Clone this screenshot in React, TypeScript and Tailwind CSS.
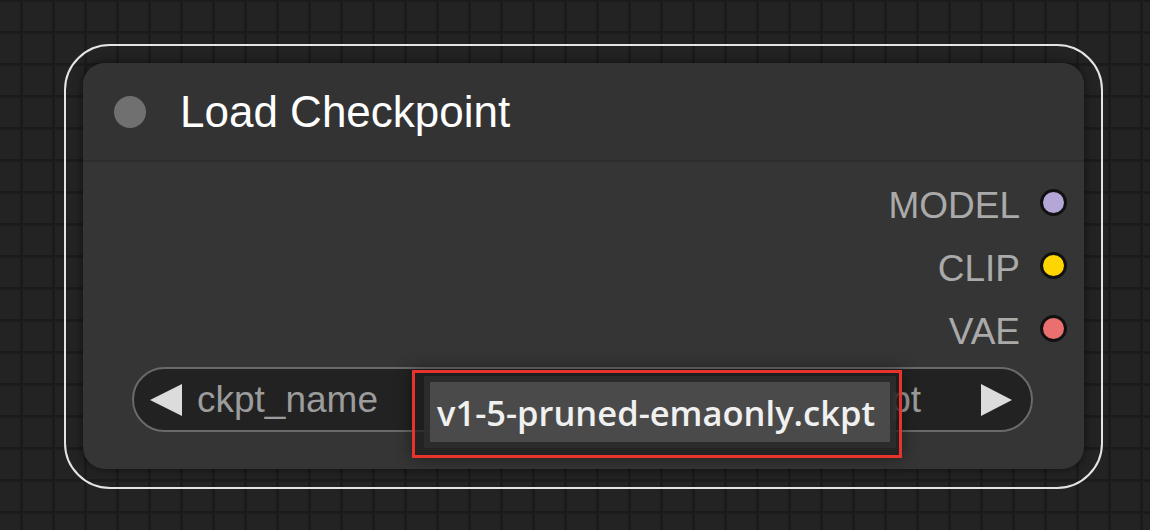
import React from 'react';

interface OutputSlot {
    name: string;
    color: string;
}

const outputs: OutputSlot[] = [
    { name: 'MODEL', color: 'bg-[#b5a6d8]' },
    { name: 'CLIP', color: 'bg-[#ffd500]' },
    { name: 'VAE', color: 'bg-[#ea7070]' },
];

function Arrow({ dir }: { dir: 'left' | 'right' }) {
    return (
        <svg width="32" height="32" viewBox="0 0 32 32" className="shrink-0">
            {dir === 'left'
                ? <polygon points="32,0 32,32 0,16" fill="#dcdcdc" />
                : <polygon points="0,0 0,32 31,16" fill="#dcdcdc" />}
        </svg>
    );
}

export default function App() {
    return (
        <div className="relative w-[1150px] h-[530px] overflow-hidden bg-[#232323] bg-[linear-gradient(to_right,#1b1b1b_3px,transparent_3px),linear-gradient(to_bottom,#1b1b1b_3px,transparent_3px)] bg-size-[32px_32px] bg-position-[20px_31px] pt-[44px] pl-[64px] font-['Liberation_Sans',Arial,sans-serif]">
            {/* selection outline */}
            <div className="w-[1039px] h-[445px] rounded-[46px] border-2 border-[#e4e4e4] p-[17px]">
                {/* node */}
                <div className="w-[1001px] h-[406px] rounded-[22px] bg-[#353535] shadow-[0_0_10px_rgba(0,0,0,0.55)] flex flex-col overflow-hidden">
                    <div className="h-[97px] shrink-0 flex items-center pl-[31px] gap-[34px] bg-[#333333]">
                        <div className="w-[32px] h-[32px] rounded-full bg-[#707070]" />
                        <span className="text-[44px] leading-none text-white">Load Checkpoint</span>
                    </div>
                    <div className="h-[2px] bg-[#2c2c2c]" />

                    {/* outputs */}
                    <div className="flex flex-col pt-[9px]">
                        {outputs.map(o => (
                            <div key={o.name} className="h-[63px] flex items-center justify-end pr-[17px] gap-[20px]">
                                <span className="text-[37px] leading-none text-[#aaaaaa] mt-[5px]">{o.name}</span>
                                <div className={`w-[27px] h-[27px] rounded-full border-[3px] border-[#111111] ${o.color}`} />
                            </div>
                        ))}
                    </div>

                    {/* combo widget */}
                    <div className="mt-[7px] ml-[49px] w-[901px] h-[65px] rounded-full border-2 border-[#6a6a6a] bg-[#222222] flex items-center pl-[16px] pr-[18px]">
                        <Arrow dir="left" />
                        <span className="ml-[15px] text-[37px] leading-none text-[#9c9c9c]">ckpt_name</span>
                        <span className="ml-auto mr-[60px] text-[37px] leading-none text-[#9c9c9c]">v1-5-pruned-emaonly.ckpt</span>
                        <Arrow dir="right" />
                    </div>
                </div>
            </div>

            {/* tooltip with highlight */}
            <div className="absolute left-[412px] top-[370px] w-[490px] h-[88px] border-[3px] border-[#e8322c] bg-[rgba(30,30,30,0.75)] shadow-[0_0_16px_rgba(0,0,0,0.45)] pl-[15px] pt-[9px] pr-[9px] pb-[13px] flex">
                <div className="flex-1 bg-[#4a4a4a] shadow-[0_0_0_6px_rgba(46,46,46,0.8)] flex items-center pl-[7px]">
                    <span className="font-['Open_Sans',sans-serif] font-semibold text-[34.5px] leading-none text-[#f0f0f0] mt-[2px]">v1-5-pruned-emaonly.ckpt</span>
                </div>
            </div>
        </div>
    );
}
